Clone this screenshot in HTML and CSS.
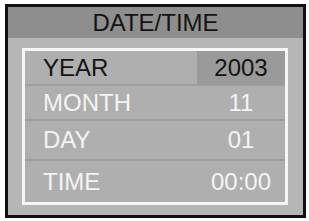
FILE: index.html
```html
<!DOCTYPE html>
<html lang="en">
<head>
    <meta charset="UTF-8">
    <meta name="viewport" content="width=device-width, initial-scale=1.0">
    <title>Date/Time</title>
    <link rel="stylesheet" href="styles.css">
</head>
<body>
    <div class="screen">
        <div class="title">DATE/TIME</div>
        <div class="content">
            <div class="menu">
                <div class="row selected">
                    <span class="label">YEAR</span>
                    <span class="value">2003</span>
                </div>
                <div class="row">
                    <span class="label">MONTH</span>
                    <span class="value">11</span>
                </div>
                <div class="row tall">
                    <span class="label">DAY</span>
                    <span class="value">01</span>
                </div>
                <div class="row tall last">
                    <span class="label">TIME</span>
                    <span class="value">00:00</span>
                </div>
            </div>
        </div>
    </div>
</body>
</html>
```

FILE: styles.css
```css
body {
    margin: 0;
    background-color: #ffffff;
    font-family: "Liberation Sans", Arial, sans-serif;
}

.screen {
    margin: 4px 0 0 5px;
    width: 295px;
    height: 208px;
    border: 3px solid #111111;
    background-color: #b6b6b6;
    display: flex;
    flex-direction: column;
}

.title {
    height: 31px;
    line-height: 31px;
    background-color: #8e8e8e;
    color: #141414;
    font-size: 24px;
    text-align: center;
}

.content {
    flex: 1;
    padding: 10px 15px 10px 14px;
}

.menu {
    border: 3px solid #f6f6f6;
    background-color: #afafaf;
}

.row {
    display: flex;
    height: 33px;
    border-bottom: 2px solid #9d9d9d;
    font-size: 24px;
    color: #f4f4f4;
}

.row.tall {
    height: 38px;
}

.row.last {
    height: 41px;
    border-bottom: none;
}

.label {
    flex: 1;
    display: flex;
    align-items: center;
    padding-left: 18px;
}

.value {
    width: 88px;
    display: flex;
    align-items: center;
    justify-content: center;
}

.row.selected {
    color: #141414;
}

.row.selected .value {
    background-color: #9a9a9a;
}
```
